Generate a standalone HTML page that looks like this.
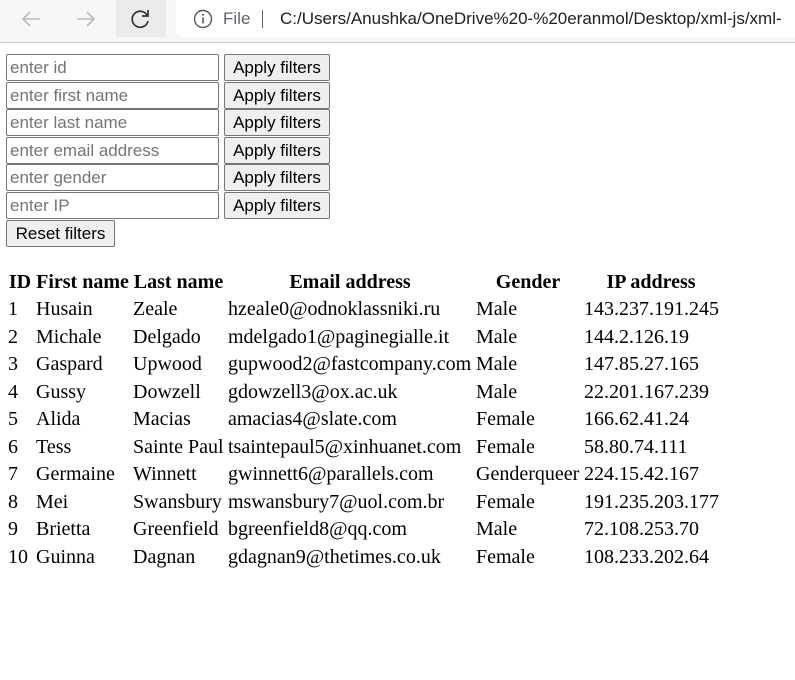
<!DOCTYPE html>
<html><head><meta charset="utf-8"><style>
body{margin:0;width:795px;height:680px;background:#fff;position:relative;overflow:hidden;font-family:"Liberation Sans",sans-serif}
.chrome{position:absolute;left:0;top:0;width:795px;height:42px;background:#f7f7f7;border-bottom:1px solid #c8c8c8}
.reload{position:absolute;left:116px;top:0;width:50px;height:37px;background:#ebebeb}
.addr{position:absolute;left:176px;top:0;width:640px;height:37px;background:#fff;border-radius:0 0 0 8px}
.url{position:absolute;left:223px;top:9px;font-size:17px;color:#202124;white-space:nowrap}
.in{position:absolute;left:6px;box-sizing:border-box;width:213px;height:27px;border:1px solid #767676;border-radius:2px;font-size:17px;color:#757575;padding:3px 0 0 3px;white-space:nowrap}
.bt{position:absolute;left:224px;width:106px;height:27px;box-sizing:border-box;border:1px solid #767676;border-radius:2px;background:#efefef;font-size:17px;color:#000;text-align:center;padding-top:3px;white-space:nowrap}
.r{position:absolute;left:6px;height:27px;font-family:"Liberation Serif",serif;font-size:20px;white-space:nowrap}
.r span{position:absolute;top:0;padding-left:2px}
.h span{font-weight:bold;text-align:center;padding:0}
</style></head><body>
<div class="chrome">
<svg style="position:absolute;left:20px;top:9px" width="22" height="20"><path d="M20 10H3M10 3L3 10l7 7" stroke="#bbb" stroke-width="1.6" fill="none"/></svg>
<svg style="position:absolute;left:75px;top:9px" width="22" height="20"><path d="M2 10h17M12 3l7 7-7 7" stroke="#bbb" stroke-width="1.6" fill="none"/></svg>
<div class="reload"></div>
<svg style="position:absolute;left:130px;top:8px" width="22" height="22"><path d="M17.5 8A8 8 0 1 0 18 13" stroke="#333" stroke-width="1.7" fill="none"/><path d="M18 2v6h-6" stroke="#333" stroke-width="1.7" fill="none"/></svg>
<div class="addr"></div>
<svg style="position:absolute;left:193px;top:9px" width="20" height="20"><circle cx="10" cy="10" r="8.5" stroke="#555" stroke-width="1.4" fill="none"/><path d="M10 8.5v6" stroke="#555" stroke-width="1.6"/><circle cx="10" cy="5.8" r="1" fill="#555"/></svg>
<div class="url" style="left:223px;color:#5f6368">File</div>
<div style="position:absolute;left:262px;top:10px;width:1px;height:18px;background:#666"></div>
<div class="url" style="left:280px">C:/Users/Anushka/OneDrive%20-%20eranmol/Desktop/xml-js/xml-</div>
</div>
<div class="in" style="top:54px">enter id</div><div class="bt" style="top:54px">Apply filters</div>
<div class="in" style="top:82px">enter first name</div><div class="bt" style="top:82px">Apply filters</div>
<div class="in" style="top:109px">enter last name</div><div class="bt" style="top:109px">Apply filters</div>
<div class="in" style="top:137px">enter email address</div><div class="bt" style="top:137px">Apply filters</div>
<div class="in" style="top:164px">enter gender</div><div class="bt" style="top:164px">Apply filters</div>
<div class="in" style="top:192px">enter IP</div><div class="bt" style="top:192px">Apply filters</div>
<div class="bt" style="top:220px;left:6px;width:109px">Reset filters</div>

<div class="r h" style="top:271px"><span style="left:0;width:28px">ID</span><span style="left:28px;width:97px">First name</span><span style="left:125px;width:95px">Last name</span><span style="left:220px;width:248px">Email address</span><span style="left:468px;width:108px">Gender</span><span style="left:576px;width:138px">IP address</span></div>
<div class="r" style="top:298px"><span style="left:0">1</span><span style="left:28px">Husain</span><span style="left:125px">Zeale</span><span style="left:220px">hzeale0@odnoklassniki.ru</span><span style="left:468px">Male</span><span style="left:576px">143.237.191.245</span></div>
<div class="r" style="top:325.5px"><span style="left:0">2</span><span style="left:28px">Michale</span><span style="left:125px">Delgado</span><span style="left:220px">mdelgado1@paginegialle.it</span><span style="left:468px">Male</span><span style="left:576px">144.2.126.19</span></div>
<div class="r" style="top:353px"><span style="left:0">3</span><span style="left:28px">Gaspard</span><span style="left:125px">Upwood</span><span style="left:220px">gupwood2@fastcompany.com</span><span style="left:468px">Male</span><span style="left:576px">147.85.27.165</span></div>
<div class="r" style="top:380.5px"><span style="left:0">4</span><span style="left:28px">Gussy</span><span style="left:125px">Dowzell</span><span style="left:220px">gdowzell3@ox.ac.uk</span><span style="left:468px">Male</span><span style="left:576px">22.201.167.239</span></div>
<div class="r" style="top:408px"><span style="left:0">5</span><span style="left:28px">Alida</span><span style="left:125px">Macias</span><span style="left:220px">amacias4@slate.com</span><span style="left:468px">Female</span><span style="left:576px">166.62.41.24</span></div>
<div class="r" style="top:435.5px"><span style="left:0">6</span><span style="left:28px">Tess</span><span style="left:125px">Sainte Paul</span><span style="left:220px">tsaintepaul5@xinhuanet.com</span><span style="left:468px">Female</span><span style="left:576px">58.80.74.111</span></div>
<div class="r" style="top:463px"><span style="left:0">7</span><span style="left:28px">Germaine</span><span style="left:125px">Winnett</span><span style="left:220px">gwinnett6@parallels.com</span><span style="left:468px">Genderqueer</span><span style="left:576px">224.15.42.167</span></div>
<div class="r" style="top:490.5px"><span style="left:0">8</span><span style="left:28px">Mei</span><span style="left:125px">Swansbury</span><span style="left:220px">mswansbury7@uol.com.br</span><span style="left:468px">Female</span><span style="left:576px">191.235.203.177</span></div>
<div class="r" style="top:518px"><span style="left:0">9</span><span style="left:28px">Brietta</span><span style="left:125px">Greenfield</span><span style="left:220px">bgreenfield8@qq.com</span><span style="left:468px">Male</span><span style="left:576px">72.108.253.70</span></div>
<div class="r" style="top:545.5px"><span style="left:0">10</span><span style="left:28px">Guinna</span><span style="left:125px">Dagnan</span><span style="left:220px">gdagnan9@thetimes.co.uk</span><span style="left:468px">Female</span><span style="left:576px">108.233.202.64</span></div>
</body></html>
